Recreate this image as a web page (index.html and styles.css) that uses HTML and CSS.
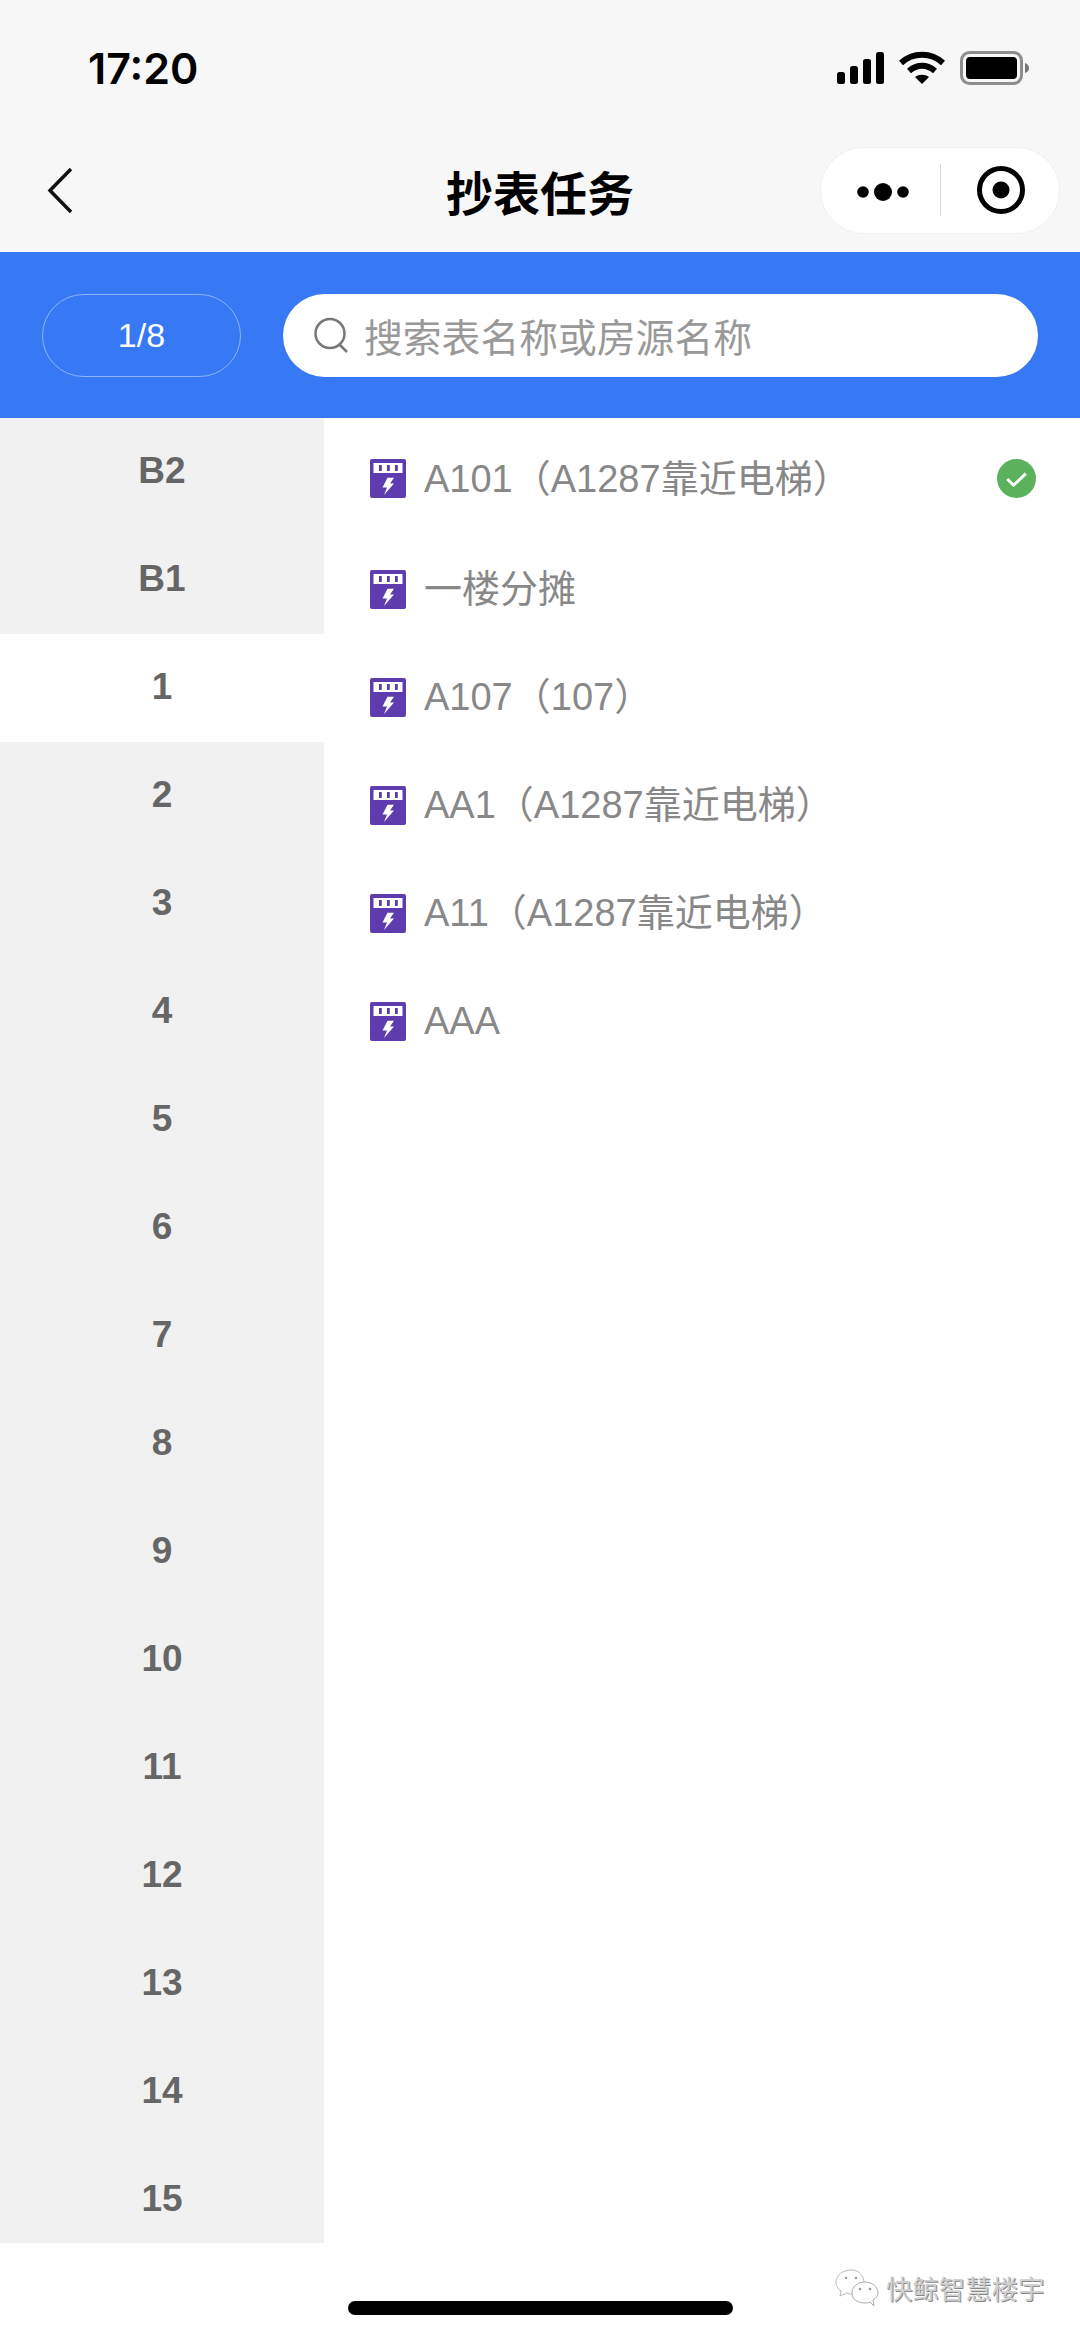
FILE: index.html
```html
<!DOCTYPE html>
<html lang="zh">
<head>
<meta charset="utf-8">
<title>抄表任务</title>
<link rel="stylesheet" href="styles.css">
</head>
<body>
<div class="page">
  <header class="top">
    <div class="status">
      <span class="time">17:20</span>
      <div class="status-icons">
        <svg class="sig" width="47" height="32" viewBox="0 0 47 32"><rect x="0" y="20" width="8" height="12" rx="2.5"/><rect x="13" y="14" width="8" height="18" rx="2.5"/><rect x="26" y="7" width="8" height="25" rx="2.5"/><rect x="39" y="0" width="8" height="32" rx="2.5"/></svg>
        <svg class="wifi" width="46" height="34" viewBox="0 0 46 34"><path d="M2 12C14 1 32 1 44 12" fill="none" stroke="#000" stroke-width="6"/><path d="M10 20C18 13 28 13 36 20" fill="none" stroke="#000" stroke-width="6"/><path d="M16 26C20 23 26 23 30 26L23 33Z"/></svg>
        <svg class="batt" width="70" height="34" viewBox="0 0 70 34"><rect x="1.5" y="1.5" width="60" height="31" rx="8" fill="none" stroke="#8e8e8e" stroke-width="3"/><rect x="6" y="6" width="51" height="22" rx="4"/><path d="M65 12C68 13 69 15 69 17C69 19 68 21 65 22Z" fill="#777"/></svg>
      </div>
    </div>
    <nav class="nav">
      <svg class="back" width="26" height="47" viewBox="0 0 26 47"><path d="M24 2L3 23.500L24 45" fill="none" stroke="#111" stroke-width="3.500"/></svg>
      <h1 class="title">抄表任务</h1>
      <div class="capsule">
        <svg class="dots" width="52" height="18" viewBox="0 0 52 18"><circle cx="6" cy="9" r="5.800"/><circle cx="26" cy="9" r="9"/><circle cx="46" cy="9" r="5.800"/></svg>
        <span class="cap-line"></span>
        <svg class="target" width="48" height="48" viewBox="0 0 48 48"><circle cx="24" cy="24" r="21.500" fill="none" stroke="#000" stroke-width="5"/><circle cx="24" cy="24" r="8.500"/></svg>
      </div>
    </nav>
  </header>

  <section class="searchbar">
    <div class="counter">1/8</div>
    <div class="search">
      <svg class="search-icon" width="36" height="36" viewBox="0 0 36 36"><circle cx="17" cy="16.500" r="14.500" fill="none" stroke="#777" stroke-width="2.500"/><path d="M26.500 27.500L34 35" fill="none" stroke="#777" stroke-width="2.500"/></svg>
      <span class="placeholder">搜索表名称或房源名称</span>
    </div>
  </section>

  <main class="body">
    <aside class="floors">
      <div class="floor">B2</div>
      <div class="floor">B1</div>
      <div class="floor active">1</div>
      <div class="floor">2</div>
      <div class="floor">3</div>
      <div class="floor">4</div>
      <div class="floor">5</div>
      <div class="floor">6</div>
      <div class="floor">7</div>
      <div class="floor">8</div>
      <div class="floor">9</div>
      <div class="floor">10</div>
      <div class="floor">11</div>
      <div class="floor">12</div>
      <div class="floor">13</div>
      <div class="floor">14</div>
      <div class="floor">15</div>
    </aside>
    <div class="list">
      <div class="item first">
        <svg class="meter" viewBox="0 0 36 39"><use href="#meter"/></svg>
        <span class="name">A101（A1287靠近电梯）</span>
        <svg class="check" width="39" height="39" viewBox="0 0 40 40"><circle cx="20" cy="20" r="20" fill="#5cb15c"/><path d="M10.500 20.500L17 27L29.500 15" fill="none" stroke="#fff" stroke-width="3"/></svg>
      </div>
      <div class="item">
        <svg class="meter" viewBox="0 0 36 39"><use href="#meter"/></svg>
        <span class="name">一楼分摊</span>
      </div>
      <div class="item">
        <svg class="meter" viewBox="0 0 36 39"><use href="#meter"/></svg>
        <span class="name">A107（107）</span>
      </div>
      <div class="item">
        <svg class="meter" viewBox="0 0 36 39"><use href="#meter"/></svg>
        <span class="name">AA1（A1287靠近电梯）</span>
      </div>
      <div class="item">
        <svg class="meter" viewBox="0 0 36 39"><use href="#meter"/></svg>
        <span class="name">A11（A1287靠近电梯）</span>
      </div>
      <div class="item">
        <svg class="meter" viewBox="0 0 36 39"><use href="#meter"/></svg>
        <span class="name">AAA</span>
      </div>
    </div>
  </main>

  <div class="watermark">
    <svg class="wechat" width="44" height="38" viewBox="0 0 44 38"><path d="M17 1C8 1 1 6 1 13C1 17 3 20 6 22L5 27L12 24C13 25 15 25 17 25C24 25 29 20 29 14C29 7 24 1 17 1Z" fill="#fff" stroke="#bbb"/><circle cx="11" cy="9" r="1.300" fill="#999"/><circle cx="21" cy="9" r="1.300" fill="#999"/><path d="M30 13C22 13 17 18 17 24C17 30 22 34 30 34C32 34 33 34 35 33L39 37L38 31C41 29 43 27 43 24C43 18 37 13 30 13Z" fill="#fff" stroke="#aaa"/><circle cx="25" cy="20" r="1.300" fill="#999"/><circle cx="35" cy="20" r="1.300" fill="#999"/></svg>
    <span class="wm-text">快鲸智慧楼宇</span>
  </div>
  <div class="home-bar"></div>
</div>
<svg class="defs" width="0" height="0">
  <symbol id="meter" viewBox="0 0 36 39">
    <rect width="36" height="39" rx="2" fill="#5f3bb0"/>
    <rect x="3.500" y="4" width="29" height="10" fill="#fff"/>
    <rect x="9" y="6" width="2.800" height="6" fill="#5f3bb0"/>
    <rect x="17" y="6" width="2.800" height="6" fill="#5f3bb0"/>
    <rect x="25" y="6" width="2.800" height="6" fill="#5f3bb0"/>
    <path d="M17.500 18.700H24L20 24.500H24L14 36L17 28.500H12.500Z" fill="#fff"/>
  </symbol>
</svg>
</body>
</html>
```
FILE: styles.css
```css
* { box-sizing: border-box; }
html, body { margin: 0; padding: 0; background: #fff; }
.page {
  position: relative;
  width: 1080px;
  height: 2337px;
  overflow: hidden;
  font-family: "Liberation Sans", "Noto Sans CJK SC", sans-serif;
  display: flex;
  flex-direction: column;
}
.defs { position: absolute; }

.top { background: #f7f7f7; height: 252px; flex: none; }
.status {
  height: 132px;
  display: flex;
  align-items: center;
  justify-content: space-between;
  padding: 4px 50px 0 88px;
}
.time { font-size: 43px; font-weight: 600; color: #000; font-family: "Inter", "Liberation Sans", sans-serif; }
.status-icons { display: flex; align-items: center; gap: 15px; }
.nav {
  position: relative;
  height: 120px;
  display: flex;
  align-items: center;
  justify-content: space-between;
  padding: 0 20px 4px 47px;
}
.title {
  position: absolute;
  left: 0;
  right: 0;
  top: 33px;
  margin: 0;
  text-align: center;
  font-size: 47px;
  line-height: 52px;
  font-weight: 700;
  color: #000;
  font-family: "Noto Sans CJK SC", sans-serif;
}
.capsule {
  width: 240px;
  height: 87px;
  border-radius: 44px;
  background: #fff;
  border: 1px solid #f0f0f0;
  display: flex;
  align-items: center;
  padding-left: 36px;
}
.dots { margin-top: 3px; }
.cap-line { width: 1px; height: 52px; background: #d8d8d8; margin-left: 31px; }
.target { margin-left: 36px; }

.searchbar {
  flex: none;
  height: 166px;
  background: #3778f4;
  display: flex;
  align-items: center;
  padding: 0 42px;
  gap: 42px;
}
.counter {
  width: 199px;
  height: 83px;
  border: 1px solid #8fb5f8;
  border-radius: 42px;
  color: #fff;
  font-size: 34px;
  display: flex;
  align-items: center;
  justify-content: center;
}
.search {
  flex: 1;
  height: 83px;
  background: #fff;
  border-radius: 42px;
  display: flex;
  align-items: center;
  padding-left: 30px;
  gap: 15px;
}
.placeholder {
  color: #999;
  font-size: 38.800px;
  font-family: "Noto Sans CJK SC", sans-serif;
}

.body { flex: 1; display: flex; min-height: 0; }
.floors { width: 324px; flex: none; height: 1825px; background: #f1f1f1; overflow: hidden; }
.floor {
  height: 108px;
  display: flex;
  align-items: center;
  justify-content: center;
  padding-bottom: 2px;
  font-size: 37px;
  font-weight: 700;
  color: #666;
}
.floor.active { background: #fff; }

.list { flex: 1; padding: 4px 0 0 46px; }
.item {
  height: 108px;
  display: flex;
  align-items: center;
  padding-right: 44px;
}
.item.first { height: 113px; }
.meter { width: 36px; height: 39px; flex: none; }
.name {
  margin-left: 18px;
  font-size: 38px;
  line-height: 44px;
  color: #888;
  flex: 1;
}

.watermark {
  position: absolute;
  left: 835px;
  top: 2268px;
  display: flex;
  align-items: center;
  gap: 7px;
}
.wm-text { font-size: 26.400px; color: #cfcfcf; text-shadow: 1px 1px 0 #8a8a8a; font-family: "Noto Sans CJK SC", sans-serif; }
.home-bar {
  position: absolute;
  left: 348px;
  bottom: 22px;
  width: 385px;
  height: 14px;
  border-radius: 7px;
  background: #000;
}
```
